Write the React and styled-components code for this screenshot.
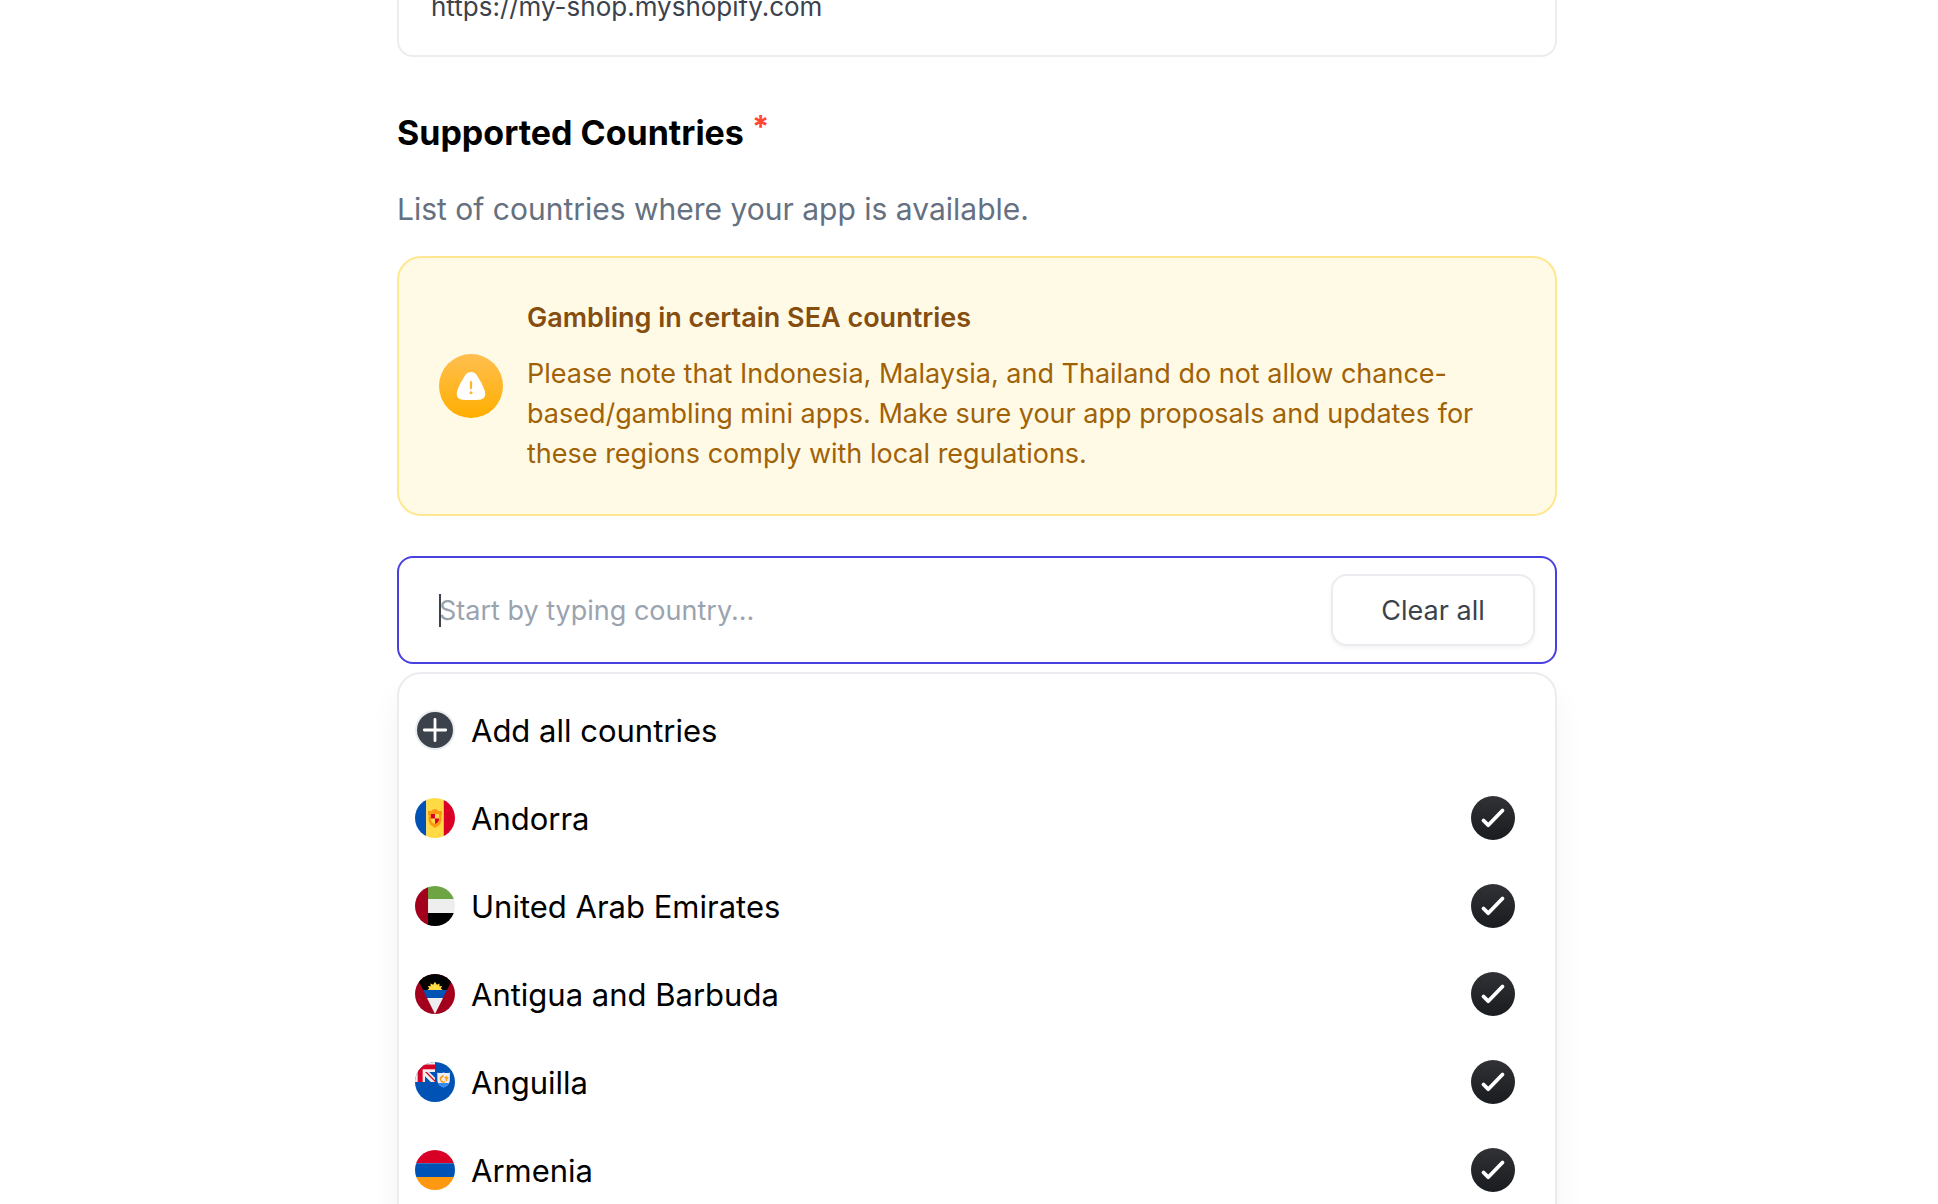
import React, { useState } from "react";
import styled, { createGlobalStyle } from "styled-components";

const GlobalStyle = createGlobalStyle`
  *, *::before, *::after { box-sizing: border-box; }
  body {
    margin: 0;
    background: #fff;
    font-family: Inter, "Liberation Sans", sans-serif;
    -webkit-font-smoothing: antialiased;
  }
  button, input { font: inherit; }
`;

const Page = styled.main`
  height: 100vh;
  overflow: hidden;
  padding-left: 16px;
`;

const Form = styled.form`
  display: flex;
  flex-direction: column;
  width: 100%;
  max-width: 1160px;
  margin: -45px auto 0;
`;

const UrlField = styled.input`
  width: 100%;
  height: 102px;
  padding: 0 32px;
  border: 2px solid #ebecef;
  border-radius: 16px;
  background: #fff;
  color: #3c424b;
  font-size: 26px;
  outline: none;
`;

const Heading = styled.h2`
  margin: 52px 0 0;
  color: #000;
  font-size: 34px;
  font-weight: 700;
  line-height: 48px;
`;

const Required = styled.span`
  color: #ff4733;
  font-size: 31px;
  font-weight: 700;
  line-height: 36px;
  vertical-align: top;
`;

const Description = styled.p`
  margin: 32px 0 0;
  color: #657080;
  font-size: 30px;
  line-height: 40px;
`;

const Alert = styled.section`
  display: flex;
  align-items: center;
  gap: 24px;
  margin-top: 27px;
  padding: 40px;
  border: 2px solid #ffe78f;
  border-radius: 24px;
  background: #fffae6;
`;

const AlertIcon = styled.svg`
  flex: none;
  width: 64px;
  height: 64px;
`;

const AlertBody = styled.div`
  display: flex;
  flex-direction: column;
  gap: 16px;
  font-size: 27px;
  line-height: 40px;
`;

const AlertTitle = styled.h3`
  margin: 0;
  color: #854d0e;
  font-size: inherit;
  font-weight: 600;
`;

const AlertText = styled.p`
  margin: 0;
  color: #a16207;
`;

const SearchField = styled.div`
  display: flex;
  align-items: center;
  height: 108px;
  margin-top: 40px;
  padding: 0 20px 0 40px;
  border: 2px solid #4940e0;
  border-radius: 16px;
  background: #fff;
`;

const SearchSlot = styled.div`
  position: relative;
  display: flex;
  flex: 1;
  align-items: center;
`;

const Caret = styled.span`
  position: absolute;
  left: 0;
  width: 2px;
  height: 33px;
  background: #3c424b;
`;

const SearchInput = styled.input`
  width: 100%;
  height: 40px;
  padding: 0;
  border: 0;
  outline: none;
  background: transparent;
  color: #3c424b;
  font-size: 27px;
  caret-color: transparent;
  &::placeholder { color: #9ba3af; opacity: 1; }
`;

const ClearButton = styled.button`
  width: 204px;
  height: 72px;
  border: 2px solid #ebecef;
  border-radius: 16px;
  background: #fff;
  box-shadow: 0 2px 4px rgba(25, 28, 32, 0.05);
  color: #3c424b;
  font-size: 27px;
  cursor: pointer;
`;

const Menu = styled.ul`
  margin: 8px 0 0;
  padding: 12px 0;
  border: 2px solid #ebecef;
  border-radius: 24px;
  background: #fff;
  box-shadow: 0 20px 32px rgba(25, 28, 32, 0.05);
  list-style: none;
`;

const Option = styled.button`
  display: flex;
  align-items: center;
  gap: 16px;
  width: 100%;
  height: 88px;
  padding: 0 40px 0 16px;
  border: 0;
  background: transparent;
  color: #000;
  font-size: 31px;
  text-align: left;
  cursor: pointer;
`;

const OptionLabel = styled.span`
  flex: 1;
`;

const OptionIcon = styled.svg`
  flex: none;
  width: 40px;
  height: 40px;
`;

const CheckIcon = styled.svg`
  flex: none;
  width: 44px;
  height: 44px;
`;

function Flag({ code, children }) {
  return (
    <OptionIcon viewBox="0 0 512 512" aria-hidden="true">
      <clipPath id={`round-${code}`}>
        <circle cx="256" cy="256" r="256" />
      </clipPath>
      <g clipPath={`url(#round-${code})`}>{children}</g>
    </OptionIcon>
  );
}

const flags = {
  ad: (
    <>
      <path fill="#0052b4" d="M0 0h144v512H0z" />
      <path fill="#ffda44" d="M144 0h224v512H144z" />
      <path fill="#d80027" d="M368 0h144v512H368z" />
      <path fill="#ff9811" d="M256 140c-20 0-36 10-42 25h-48v50c12 8 10 20 6 40 0 60 24 90 54 108l30 22 30-22c30-18 54-48 54-108-4-20-6-32 6-40v-50h-48c-6-15-22-25-42-25z" />
      <path fill="#ffda44" d="M204 205h104v66c0 30-20 46-52 62-32-16-52-32-52-62z" />
      <path fill="#d80027" d="M204 205h52v57h-52zM256 262h52v9c0 30-20 46-52 62z" />
    </>
  ),
  ae: (
    <>
      <path fill="#eee" d="M0 0h512v512H0z" />
      <path fill="#6da544" d="M160 0h352v167H160z" />
      <path fill="#000" d="M160 345h352v167H160z" />
      <path fill="#a2001d" d="M0 0h167v512H0z" />
    </>
  ),
  ag: (
    <>
      <path fill="#a2001d" d="M0 0h512v512H0z" />
      <path fill="#eee" d="M154 307h204L256 512z" />
      <path fill="#000" d="M0 0h512L409 206H103z" />
      <path fill="#0052b4" d="M103 206h306l-51 101H154z" />
      <path fill="#ffda44" d="M156 206l26-20-18-32 36 4-2-38 34 18 24-38 24 38 34-18-2 38 36-4-18 32 26 20z" />
    </>
  ),
  ai: (
    <>
      <path fill="#0052b4" d="M0 0h512v512H0z" />
      <path fill="#eee" d="M0 0h256v256H0z" />
      <path fill="#d80027" d="M34 32h222v60H98v164H34z" />
      <path fill="#0052b4" d="M182 128h74v74zM128 182v74h74z" />
      <path fill="#d80027" d="M128 128h24l104 104v24z" />
      <path fill="#eee" d="M286 134c26 10 54 10 80 0 26 10 54 10 80 0v94c0 56-34 80-80 98-46-18-80-42-80-98z" />
      <path fill="#338af3" d="M292 270c14 28 42 44 74 56 32-12 60-28 74-56z" />
      <path fill="none" stroke="#ff9811" strokeWidth="20" strokeLinecap="round" d="M326 222c0-22 14-36 36-42M332 240c10 12 26 18 42 16M402 190v46M386 202l32 4" />
    </>
  ),
  am: (
    <>
      <path fill="#d80027" d="M0 0h512v170H0z" />
      <path fill="#0052b4" d="M0 170h512v175H0z" />
      <path fill="#ff9811" d="M0 345h512v167H0z" />
    </>
  ),
};

const countries = [
  { code: "ad", name: "Andorra" },
  { code: "ae", name: "United Arab Emirates" },
  { code: "ag", name: "Antigua and Barbuda" },
  { code: "ai", name: "Anguilla" },
  { code: "am", name: "Armenia" },
];

function WarningBadge() {
  return (
    <AlertIcon viewBox="0 0 64 64" aria-hidden="true">
      <linearGradient id="warning" x1="0" y1="0" x2="0" y2="1">
        <stop offset="0" stopColor="#ffbf50" />
        <stop offset="1" stopColor="#ffae00" />
      </linearGradient>
      <circle cx="32" cy="32" r="32" fill="url(#warning)" />
      <path fill="#fff" d="M32 18c-2.800 0-4.900 1.400-6.300 4C22.600 26.800 19.800 31.800 18.200 37c-1.500 5.300 1 8.400 5.500 8.800 5.500.4 11.100.4 16.600 0 4.500-.4 7-3.500 5.500-8.800C44.200 31.800 41.400 26.800 38.300 22c-1.400-2.600-3.500-4-6.300-4z" />
      <path stroke="#ffb52b" strokeWidth="2.200" strokeLinecap="round" d="M32 28.200v6" />
      <circle cx="32" cy="38.700" r="1.500" fill="#ffb52b" />
    </AlertIcon>
  );
}

function PlusBadge() {
  return (
    <OptionIcon viewBox="0 0 40 40" aria-hidden="true">
      <circle cx="20" cy="20" r="20" fill="#ebecef" />
      <circle cx="20" cy="20" r="18" fill="#3c424b" />
      <path stroke="#fff" strokeWidth="2.800" strokeLinecap="round" d="M20 9.300v21.400M9.300 20h21.400" />
    </OptionIcon>
  );
}

function CheckBadge({ id }) {
  return (
    <CheckIcon viewBox="0 0 44 44" aria-hidden="true">
      <linearGradient id={id} x1="0" y1="0" x2="0" y2="1">
        <stop offset="0" stopColor="#303236" />
        <stop offset="1" stopColor="#191c20" />
      </linearGradient>
      <circle cx="22" cy="22" r="22" fill={`url(#${id})`} />
      <path fill="none" stroke="#fff" strokeWidth="3.800" strokeLinecap="round" strokeLinejoin="round" d="M12.500 24.500l4.700 4.700L31.500 14.500" />
    </CheckIcon>
  );
}

export default function App() {
  const [url, setUrl] = useState("https://my-shop.myshopify.com");
  const [query, setQuery] = useState("");
  const [selected, setSelected] = useState(countries.map((c) => c.code));

  const toggle = (code) =>
    setSelected((list) =>
      list.includes(code) ? list.filter((c) => c !== code) : [...list, code]
    );

  const visible = countries.filter((c) =>
    c.name.toLowerCase().includes(query.toLowerCase())
  );

  return (
    <>
      <GlobalStyle />
      <Page>
        <Form onSubmit={(e) => e.preventDefault()}>
          <UrlField
            type="url"
            aria-label="App URL"
            value={url}
            onChange={(e) => setUrl(e.target.value)}
          />
          <Heading id="countries-heading">
            Supported Countries <Required>*</Required>
          </Heading>
          <Description>List of countries where your app is available.</Description>
          <Alert>
            <WarningBadge />
            <AlertBody>
              <AlertTitle>Gambling in certain SEA countries</AlertTitle>
              <AlertText>
                Please note that Indonesia, Malaysia, and Thailand do not allow
                chance-based/gambling mini apps. Make sure your app proposals and
                updates for these regions comply with local regulations.
              </AlertText>
            </AlertBody>
          </Alert>
          <SearchField>
            <SearchSlot>
              {query === "" && <Caret />}
              <SearchInput
                type="text"
                aria-labelledby="countries-heading"
                placeholder="Start by typing country..."
                value={query}
                onChange={(e) => setQuery(e.target.value)}
              />
            </SearchSlot>
            <ClearButton type="button" onClick={() => setSelected([])}>
              Clear all
            </ClearButton>
          </SearchField>
          <Menu>
            <li>
              <Option
                type="button"
                onClick={() => setSelected(countries.map((c) => c.code))}
              >
                <PlusBadge />
                <OptionLabel>Add all countries</OptionLabel>
              </Option>
            </li>
            {visible.map(({ code, name }) => (
              <li key={code}>
                <Option
                  type="button"
                  aria-pressed={selected.includes(code)}
                  onClick={() => toggle(code)}
                >
                  <Flag code={code}>{flags[code]}</Flag>
                  <OptionLabel>{name}</OptionLabel>
                  {selected.includes(code) && <CheckBadge id={`check-${code}`} />}
                </Option>
              </li>
            ))}
          </Menu>
        </Form>
      </Page>
    </>
  );
}
